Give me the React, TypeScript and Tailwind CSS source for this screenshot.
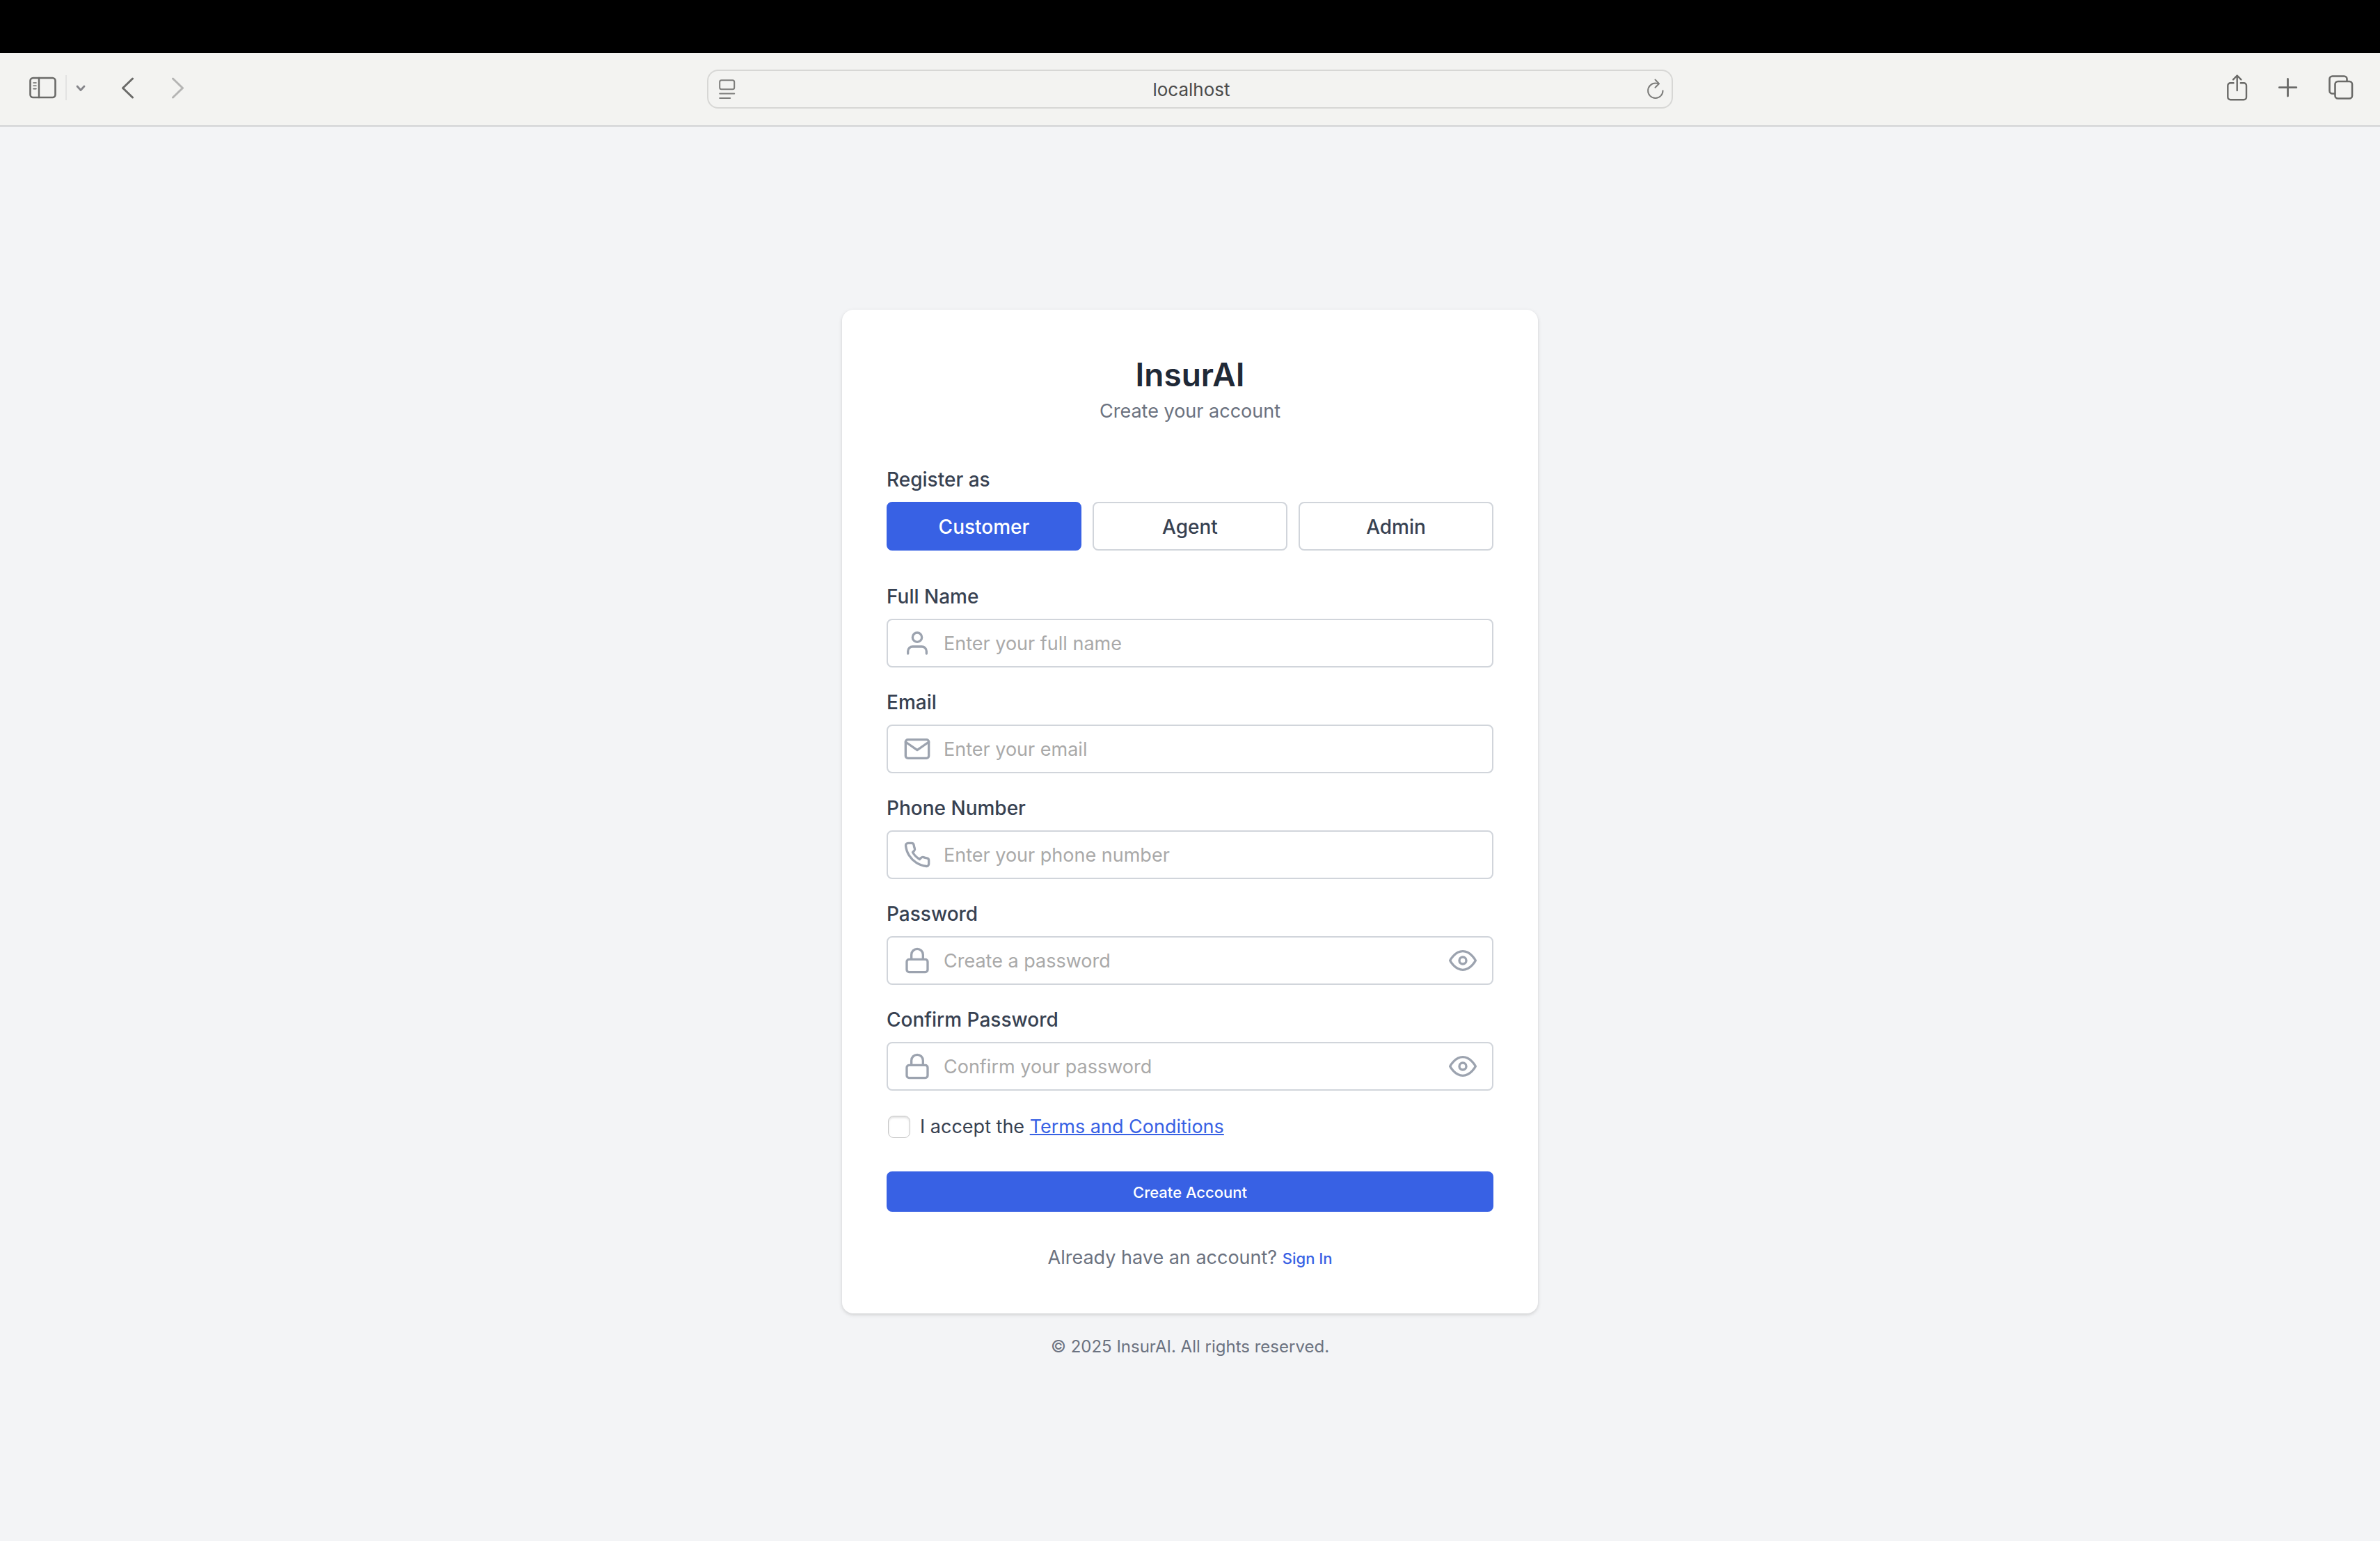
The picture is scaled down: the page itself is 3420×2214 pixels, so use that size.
import { useState } from "react";
import type { ReactNode } from "react";
import { FiEye, FiLock, FiMail, FiPhone, FiUser } from "react-icons/fi";

function SidebarIcon() {
  return (
    <svg width="40" height="32" viewBox="0 0 40 32" fill="none" stroke="currentColor" strokeLinecap="round">
      <rect x="1.5" y="2" width="36" height="28" rx="4" strokeWidth="2.6" />
      <path d="M14 2v28" strokeWidth="2.4" />
      <path d="M6 9h4M6 13.300h4M6 17.600h4" strokeWidth="1.600" />
    </svg>
  );
}

function Chevron({ d, width, height, stroke }: { d: string; width: number; height: number; stroke: number }) {
  return (
    <svg width={width} height={height} viewBox={`0 0 ${width} ${height}`} fill="none" stroke="currentColor" strokeWidth={stroke} strokeLinecap="round" strokeLinejoin="round">
      <path d={d} />
    </svg>
  );
}

function ReaderIcon() {
  return (
    <svg width="24" height="28" viewBox="0 0 24 28" fill="none" stroke="currentColor" strokeWidth="2" strokeLinecap="round">
      <rect x="1.200" y="1.200" width="21" height="13" rx="2.500" />
      <path d="M1.200 20.500h21M1.200 27h15" />
    </svg>
  );
}

function ReloadIcon() {
  return (
    <svg width="24" height="30" viewBox="0 0 24 30" fill="none" stroke="currentColor" strokeWidth="2" strokeLinecap="round" strokeLinejoin="round">
      <path d="M22.500 17.300A10.700 10.700 0 1 1 11.800 6.600c1.500 0 3 .2 4.200.5" />
      <path d="M11.500 1.500 17 7.300l-5.500 5.500" />
    </svg>
  );
}

function ShareIcon() {
  return (
    <svg width="30" height="38" viewBox="0 0 30 38" fill="none" stroke="currentColor" strokeWidth="2.400" strokeLinecap="round" strokeLinejoin="round">
      <path d="M14.700 23V2M9 7.300 14.700 1.500l5.700 5.800" />
      <path d="M9.500 12.300H5a3.700 3.700 0 0 0-3.700 3.700v16.500A3.700 3.700 0 0 0 5 36.200h19.300a3.700 3.700 0 0 0 3.700-3.700V16a3.700 3.700 0 0 0-3.700-3.700h-4.500" />
    </svg>
  );
}

function PlusIcon() {
  return (
    <svg width="28" height="28" viewBox="0 0 28 28" fill="none" stroke="currentColor" strokeWidth="2.800" strokeLinecap="round">
      <path d="M13.500 1.500v24.500M1.300 13.700h24.500" />
    </svg>
  );
}

function TabsIcon() {
  return (
    <svg width="36" height="36" viewBox="0 0 36 36" fill="none" stroke="currentColor" strokeWidth="2.600" strokeLinecap="round" strokeLinejoin="round">
      <path d="M8.500 26.500H5.500a4 4 0 0 1-4-4v-17a4 4 0 0 1 4-4h17a4 4 0 0 1 4 4v2.500" />
      <rect x="9.500" y="9" width="24.500" height="24.500" rx="4" />
    </svg>
  );
}

function BrowserBar() {
  return (
    <header className="grid h-[106px] grid-cols-[1fr_1388px_1fr] items-center border-b-2 border-[#d2d3d5] bg-[#f3f3f1] py-1 text-[#6a6a68]">
      <div className="flex items-center pb-1 pl-[42px]">
        <button type="button" aria-label="Show sidebar"><SidebarIcon /></button>
        <span className="ml-3 h-9 w-0.5 bg-[#e3e3e2]" />
        <button type="button" aria-label="Tab groups" className="ml-3 text-[#85858a]">
          <Chevron d="M3 3 8 8.500 13 3" width={16} height={11} stroke={2.8} />
        </button>
        <button type="button" aria-label="Back" className="ml-[50px]">
          <Chevron d="M16.500 2 2.500 15.500l14 13.500" width={20} height={31} stroke={3} />
        </button>
        <button type="button" aria-label="Forward" className="ml-[52px] text-[#b5b5b4]">
          <Chevron d="M2.500 2 16.500 15.500 2.500 29" width={20} height={31} stroke={3} />
        </button>
      </div>
      <div className="flex h-14 items-center rounded-2xl border-2 border-[#d7d7d5] px-[15px] text-[#7d7d7b]">
        <button type="button" aria-label="Reader"><ReaderIcon /></button>
        <input
          aria-label="Address"
          defaultValue="localhost"
          className="min-w-0 flex-1 bg-transparent pt-0.5 text-center text-[26px] leading-8 text-[#4b4b4b] outline-none"
        />
        <button type="button" aria-label="Reload" className="-mr-1"><ReloadIcon /></button>
      </div>
      <div className="flex items-center justify-end gap-[44px] pr-[38px] pb-1">
        <button type="button" aria-label="Share"><ShareIcon /></button>
        <button type="button" aria-label="New tab"><PlusIcon /></button>
        <button type="button" aria-label="Tab overview"><TabsIcon /></button>
      </div>
    </header>
  );
}

type FieldProps = { id: string; label: string; placeholder: string; type: string; icon: ReactNode };

function Field({ id, label, placeholder, type, icon }: FieldProps) {
  const [visible, setVisible] = useState(false);
  const secret = type === "password";
  return (
    <div>
      <label htmlFor={id} className="mb-3 block text-[28px] leading-10 font-medium text-[#374151]">{label}</label>
      <div className="flex h-[70px] items-center rounded-lg border-2 border-[#d1d5db] px-[22px] text-[#9ca3af]">
        {icon}
        <input
          id={id}
          type={secret && visible ? "text" : type}
          placeholder={placeholder}
          className="ml-[18px] min-w-0 flex-1 bg-transparent pt-0.5 text-[#1f2937] outline-none placeholder:text-[#a9a9a9]"
        />
        {secret && (
          <button type="button" aria-label={`Show ${label.toLowerCase()}`} onClick={() => setVisible(!visible)}>
            <FiEye size={40} />
          </button>
        )}
      </div>
    </div>
  );
}

const roles = ["Customer", "Agent", "Admin"];

const fields: FieldProps[] = [
  { id: "name", label: "Full Name", placeholder: "Enter your full name", type: "text", icon: <FiUser size={40} /> },
  { id: "email", label: "Email", placeholder: "Enter your email", type: "email", icon: <FiMail size={40} /> },
  { id: "phone", label: "Phone Number", placeholder: "Enter your phone number", type: "tel", icon: <FiPhone size={40} /> },
  { id: "password", label: "Password", placeholder: "Create a password", type: "password", icon: <FiLock size={40} /> },
  { id: "confirm", label: "Confirm Password", placeholder: "Confirm your password", type: "password", icon: <FiLock size={40} /> },
];

export default function App() {
  const [role, setRole] = useState("Customer");
  return (
    <div className="flex min-h-screen flex-col bg-[#f3f4f6] font-['Inter',sans-serif] text-[27px] leading-10">
      <div className="h-[76px] bg-black" />
      <BrowserBar />
      <main className="flex flex-1 flex-col items-center justify-center">
        <section className="w-full max-w-[1000px] rounded-2xl bg-white p-16 shadow-[0_2px_6px_rgba(0,0,0,0.1),0_2px_4px_rgba(0,0,0,0.06)]">
          <h1 className="text-center text-[46px] leading-[58px] font-semibold text-[#1f2937]">InsurAI</h1>
          <p className="mt-1 text-center text-[#6b7280]">Create your account</p>
          <form className="mt-[58px]" onSubmit={(e) => e.preventDefault()}>
            <fieldset>
              <legend className="mb-3 text-[28px] leading-10 font-medium text-[#374151]">Register as</legend>
              <div className="grid grid-cols-3 gap-4">
                {roles.map((r) => (
                  <button
                    key={r}
                    type="button"
                    aria-pressed={r === role}
                    onClick={() => setRole(r)}
                    className={
                      r === role
                        ? "h-[70px] rounded-lg border-2 border-[#3861e4] bg-[#3861e4] pt-0.5 text-[28px] font-medium text-white"
                        : "h-[70px] rounded-lg border-2 border-[#d1d5db] bg-white pt-0.5 text-[28px] font-medium text-[#374151]"
                    }
                  >
                    {r}
                  </button>
                ))}
              </div>
            </fieldset>
            <div className="mt-[46px] flex flex-col gap-[30px]">
              {fields.map((f) => (
                <Field key={f.id} {...f} />
              ))}
              <div className="flex items-center pt-0.5 text-[#374151]">
                <input
                  id="terms"
                  type="checkbox"
                  className="mr-3.5 ml-0.5 size-8 appearance-none rounded-lg border border-[#c6c6c6] bg-white shadow-[inset_0_2px_3px_rgba(0,0,0,0.12)] checked:bg-[#3861e4]"
                />
                <label htmlFor="terms">
                  I accept the <a href="#terms" className="text-[#3861e4] underline decoration-2">Terms and Conditions</a>
                </label>
              </div>
            </div>
            <button type="submit" className="mt-11 block h-[58px] w-full rounded-lg bg-[#3861e4] pt-0.5 text-[22px] font-medium text-white">
              Create Account
            </button>
          </form>
          <p className="mt-[46px] h-9 text-center text-[#6b7280]">
            Already have an account? <button type="button" className="text-[22px] font-medium text-[#3861e4]">Sign In</button>
          </p>
        </section>
        <footer className="mt-8 text-center text-[24px] leading-8 text-[#6b7280]">© 2025 InsurAI. All rights reserved.</footer>
      </main>
    </div>
  );
}
